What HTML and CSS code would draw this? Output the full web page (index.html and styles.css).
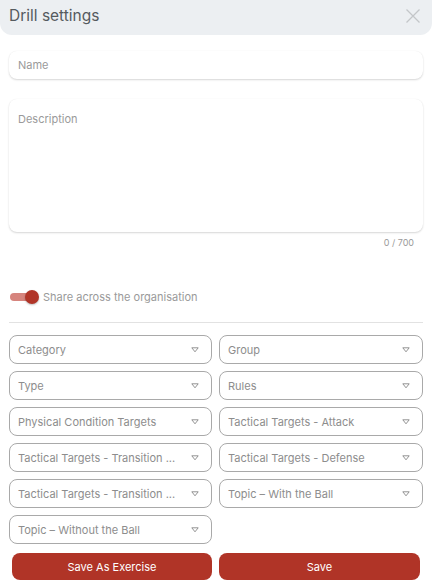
FILE: index.html
```html
<!DOCTYPE html>
<html>
<head>
<meta charset="utf-8">
<link rel="stylesheet" href="styles.css">
</head>
<body>
<div class="dialog">
  <header class="head">
    <h1 class="title">Drill settings</h1>
    <button class="close" aria-label="Close">
      <svg width="16" height="16" viewBox="0 0 16 16"><path d="M1.5 1.5 L14.5 14.5 M14.5 1.5 L1.5 14.5" stroke="#c3c6c9" stroke-width="1.3" fill="none"/></svg>
    </button>
  </header>
  <div class="body">
    <div class="field name">Name</div>
    <div class="field desc">Description</div>
    <div class="counter">0 / 700</div>
    <div class="share">
      <span class="toggle"><span class="track"></span><span class="thumb"></span></span>
      <span class="share-label">Share across the organisation</span>
    </div>
    <hr class="divider">
    <div class="selects">
      <div class="select"><span class="sel-text">Category</span><svg class="caret" width="8" height="6" viewBox="0 0 8 6"><path d="M0.8 0.8 H7.2 L4 4.8 Z" fill="none" stroke="#888" stroke-width="0.9" stroke-linejoin="round"/></svg></div>
      <div class="select"><span class="sel-text">Group</span><svg class="caret" width="8" height="6" viewBox="0 0 8 6"><path d="M0.8 0.8 H7.2 L4 4.8 Z" fill="none" stroke="#888" stroke-width="0.9" stroke-linejoin="round"/></svg></div>
      <div class="select"><span class="sel-text">Type</span><svg class="caret" width="8" height="6" viewBox="0 0 8 6"><path d="M0.8 0.8 H7.2 L4 4.8 Z" fill="none" stroke="#888" stroke-width="0.9" stroke-linejoin="round"/></svg></div>
      <div class="select"><span class="sel-text">Rules</span><svg class="caret" width="8" height="6" viewBox="0 0 8 6"><path d="M0.8 0.8 H7.2 L4 4.8 Z" fill="none" stroke="#888" stroke-width="0.9" stroke-linejoin="round"/></svg></div>
      <div class="select"><span class="sel-text">Physical Condition Targets</span><svg class="caret" width="8" height="6" viewBox="0 0 8 6"><path d="M0.8 0.8 H7.2 L4 4.8 Z" fill="none" stroke="#888" stroke-width="0.9" stroke-linejoin="round"/></svg></div>
      <div class="select"><span class="sel-text">Tactical Targets - Attack</span><svg class="caret" width="8" height="6" viewBox="0 0 8 6"><path d="M0.8 0.8 H7.2 L4 4.8 Z" fill="none" stroke="#888" stroke-width="0.9" stroke-linejoin="round"/></svg></div>
      <div class="select"><span class="sel-text">Tactical Targets - Transition ...</span><svg class="caret" width="8" height="6" viewBox="0 0 8 6"><path d="M0.8 0.8 H7.2 L4 4.8 Z" fill="none" stroke="#888" stroke-width="0.9" stroke-linejoin="round"/></svg></div>
      <div class="select"><span class="sel-text">Tactical Targets - Defense</span><svg class="caret" width="8" height="6" viewBox="0 0 8 6"><path d="M0.8 0.8 H7.2 L4 4.8 Z" fill="none" stroke="#888" stroke-width="0.9" stroke-linejoin="round"/></svg></div>
      <div class="select"><span class="sel-text">Tactical Targets - Transition ...</span><svg class="caret" width="8" height="6" viewBox="0 0 8 6"><path d="M0.8 0.8 H7.2 L4 4.8 Z" fill="none" stroke="#888" stroke-width="0.9" stroke-linejoin="round"/></svg></div>
      <div class="select"><span class="sel-text">Topic – With the Ball</span><svg class="caret" width="8" height="6" viewBox="0 0 8 6"><path d="M0.8 0.8 H7.2 L4 4.8 Z" fill="none" stroke="#888" stroke-width="0.9" stroke-linejoin="round"/></svg></div>
      <div class="select"><span class="sel-text">Topic – Without the Ball</span><svg class="caret" width="8" height="6" viewBox="0 0 8 6"><path d="M0.8 0.8 H7.2 L4 4.8 Z" fill="none" stroke="#888" stroke-width="0.9" stroke-linejoin="round"/></svg></div>
    </div>
    <div class="actions">
      <button class="btn">Save As Exercise</button>
      <button class="btn">Save</button>
    </div>
  </div>
</div>
</body>
</html>
```

FILE: styles.css
```css
* { box-sizing: border-box; }
html, body { margin: 0; padding: 0; background: #fff; }
body {
  font-family: Inter, "Noto Sans", sans-serif;
  width: 432px;
  height: 588px;
  overflow: hidden;
}
.dialog { display: flex; flex-direction: column; }
.head {
  height: 35px;
  background: #eceff2;
  border-radius: 0 0 12px 12px;
  display: flex;
  align-items: center;
  justify-content: space-between;
  padding: 0 11px 4px 9px;
}
.title {
  margin: 0;
  font-size: 15.5px;
  font-weight: 400;
  color: #555a5e;
  letter-spacing: 0;
  line-height: 20px;
}
.close {
  border: 0;
  background: none;
  padding: 0;
  width: 16px;
  height: 16px;
  display: flex;
}
.body { padding: 16px 9px 0 9px; display: flex; flex-direction: column; }
.field {
  background: #fff;
  border-radius: 8px;
  box-shadow: 0 1px 2px rgba(0,0,0,0.16), 0 0 1px rgba(0,0,0,0.06);
  font-size: 11px;
  color: #9a9a9a;
  padding: 0 9px;
}
.name { height: 28px; display: flex; align-items: center; }
.desc { height: 133px; margin-top: 20px; padding-top: 13px; line-height: 14px; }
.counter {
  align-self: flex-end;
  font-size: 9px;
  color: #9a9a9a;
  margin-top: 5px;
  margin-right: 9px;
  line-height: 11px;
}
.share {
  display: flex;
  align-items: center;
  margin-top: 41px;
  height: 16px;
  padding-left: 1px;
}
.toggle { position: relative; width: 30px; height: 16px; display: inline-block; }
.track {
  position: absolute;
  left: 0; top: 4px;
  width: 26px; height: 8px;
  border-radius: 4px;
  background: #d6847d;
}
.thumb {
  position: absolute;
  left: 15px; top: 1px;
  width: 14px; height: 14px;
  border-radius: 50%;
  background: #b13528;
  box-shadow: 0 1px 2px rgba(0,0,0,0.25);
}
.share-label { font-size: 11px; color: #9a9a9a; margin-left: 3px; }
.divider {
  border: 0;
  border-top: 1px solid #e2e2e2;
  margin: 17px 0 0 0;
  height: 0;
}
.selects {
  margin-top: 12px;
  display: grid;
  grid-template-columns: 203px 204px;
  column-gap: 7px;
  row-gap: 7px;
}
.select {
  height: 29px;
  border: 1px solid #a9a9a9;
  border-radius: 8px;
  display: flex;
  align-items: center;
  padding: 0 12px 0 8px;
  gap: 8px;
}
.sel-text {
  flex: 1;
  min-width: 0;
  font-size: 11px;
  color: #8d8d8d;
  white-space: nowrap;
  overflow: hidden;
}
.caret { flex: none; }
.actions {
  margin-top: 9px;
  display: grid;
  grid-template-columns: 200px 201px;
  column-gap: 7px;
  padding-left: 3px;
}
.btn {
  height: 27px;
  border: 0;
  border-radius: 8px;
  background: #b03427;
  color: #fff;
  font-family: Inter, "Noto Sans", sans-serif;
  font-size: 11px;
}
```
